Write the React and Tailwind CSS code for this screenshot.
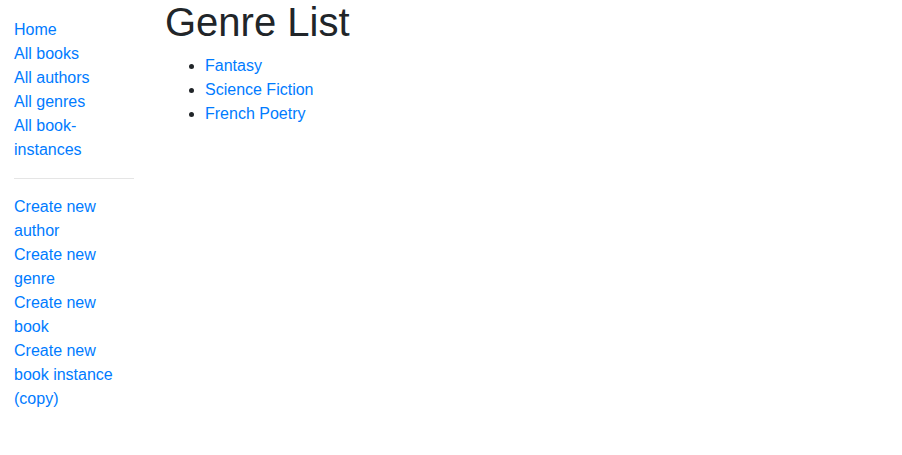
export default function App() {
  const top = ["Home", "All books", "All authors", "All genres", "All book-instances"];
  const bottom = ["Create new author", "Create new genre", "Create new book", "Create new book instance (copy)"];
  return (
    <div className="min-h-[455px] bg-white font-['Liberation_Sans',Arial,sans-serif] text-[16px] leading-[24px] text-[#212529]">
      <div className="flex">
        <div className="w-[150px] shrink-0 pl-[14px] pr-[16px]">
          <ul className="mt-[18px] list-none p-0">
            {top.map((t) => (
              <li key={t}>
                <a href="#" className="text-[#007bff]">{t}</a>
              </li>
            ))}
          </ul>
          <hr className="mt-4 mb-4 border-0 border-t border-t-[rgba(0,0,0,0.1)]" />
          <ul className="list-none p-0">
            {bottom.map((t) => (
              <li key={t}>
                <a href="#" className="text-[#007bff]">{t}</a>
              </li>
            ))}
          </ul>
        </div>
        <div className="flex-1 px-[15px]">
          <h1 className="mt-[-2px] mb-[8px] text-[40px] leading-[48px] font-normal text-[#212529]">Genre List</h1>
          <ul className="list-disc pl-10">
            <li><a href="#" className="text-[#007bff]">Fantasy</a></li>
            <li><a href="#" className="text-[#007bff]">Science Fiction</a></li>
            <li><a href="#" className="text-[#007bff]">French Poetry</a></li>
          </ul>
        </div>
      </div>
    </div>
  );
}
